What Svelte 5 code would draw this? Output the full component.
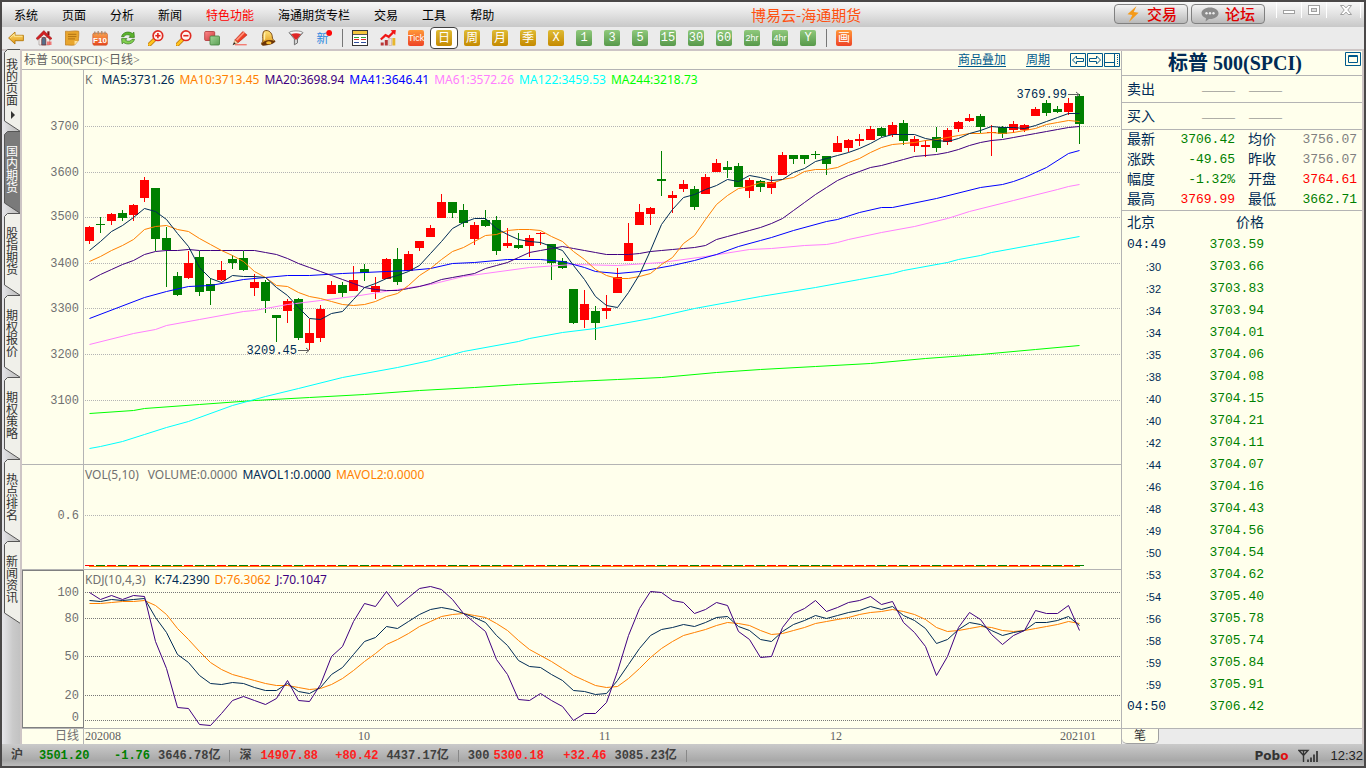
<script>
  const menus = ['系统', '页面', '分析', '新闻', '特色功能', '海通期货专栏', '交易', '工具', '帮助'];
  const tabs = ['我的页面', '国内期货', '股指期货', '期权报价', '期权策略', '热点排名', '新闻资讯'];

  const tools = [
    ['back', '后退'], ['home', '首页'], ['note', '公告'], ['f10', 'F10'], ['refresh', '刷新'],
    ['zoomin', '放大'], ['zoomout', '缩小'], ['overlay', '叠加'], ['pencil', '画线'],
    ['bell', '预警'], ['filter', '过滤'], ['new', '新'],
    ['sep', ''],
    ['quote', '报价'], ['trend', '走势'],
    ['Tick', 'tile orange small'], ['日', 'tile gold on'], ['周', 'tile gold'], ['月', 'tile gold'],
    ['季', 'tile gold'], ['X', 'tile gold latin'],
    ['1', 'tile green latin'], ['3', 'tile green latin'], ['5', 'tile green latin'],
    ['15', 'tile green latin'], ['30', 'tile green latin'], ['60', 'tile green latin'],
    ['2hr', 'tile green small'], ['4hr', 'tile green small'], ['Y', 'tile green latin'],
    ['sep', ''],
    ['画', 'tile orange']
  ];

  // Each bar: direction, high, body top, body bottom, low (chart units)
  const bars = `R 226 227 241 244,G 217 224 225 233,R 213 214 221 225,G 210 213 218 221,R 204 205 215 221,
R 177 180 198 202,G 188 188 239 251,G 227 238 250 287,G 272 276 295 296,R 251 263 278 279,
G 251 257 292 296,G 278 284 291 305,R 261 270 280 281,G 255 259 263 269,G 251 258 270 271,
R 274 282 288 296,G 280 282 301 313,G 315 315 318 342,R 299 301 311 323,G 298 299 338 340,
R 319 333 343 350,R 305 309 338 342,R 281 285 294 294,G 282 285 293 297,R 266 280 291 291,
G 264 269 273 281,R 277 286 292 299,R 258 259 279 279,G 248 259 282 285,R 251 254 271 271,
R 241 241 248 251,R 225 228 237 237,R 194 202 218 218,G 202 202 213 218,G 204 210 223 227,
R 222 225 239 245,G 210 220 226 227,G 216 220 251 255,R 228 243 246 248,G 233 245 248 249,
R 235 238 246 257,R 232 233 234 245,G 244 244 263 280,G 258 261 268 269,G 289 289 323 324,
R 290 304 320 328,G 306 311 323 340,R 295 308 311 319,R 268 277 293 293,R 223 243 261 261,
R 204 212 225 225,R 207 208 214 225,G 151 179 181 196,R 191 195 198 213,R 180 184 189 192,
G 186 189 207 210,R 174 177 194 194,R 159 163 172 172,G 161 167 170 178,G 163 166 187 187,
R 178 180 191 198,G 180 181 187 192,R 176 182 188 194,R 152 155 175 175,G 155 155 159 164,
G 155 155 159 164,G 151 154 155 159,G 156 156 164 175,R 136 143 152 152,R 139 140 148 152,
R 134 139 141 146,R 126 129 140 140,G 127 128 136 137,R 122 125 135 137,G 120 123 141 145,
R 136 139 146 152,R 140 145 147 157,G 127 137 148 152,R 128 130 142 145,R 121 122 129 132,
R 114 118 121 122,G 114 116 127 133,R 125 132 133 156,G 126 127 134 138,R 121 124 130 133,
R 124 125 130 132,R 107 109 116 116,G 100 103 113 116,G 106 109 112 113,R 98 103 112 115,
G 94 96 124 144`.split(',').map((s, i) => {
    const [d, h, t, b, l] = s.trim().split(' ');
    return { x: 89 + 11 * i, color: d === 'R' ? '#ff0000' : '#008000', h: +h, t: +t, b: +b, l: +l };
  });

  const dense = (s) => s.split(',').map((y, i) => `${89.5 + 11 * i},${+y + 0.5}`).join(' ');
  const sparse = (s) => s.split(',').map((p) => {
    const [i, y] = p.split(':');
    return `${89.5 + 11 * i},${+y + 0.5}`;
  }).join(' ');

  const averages = [
    ['#00ff00', sparse('0:413,4:410,5:408,10:404,15:400,20:397,25:394,30:390,35:387,39:384,44:381,48:379,52:377,57:372,61:369,66:366,71:363,76:358,81:354,86:349,90:345')],
    ['#00ffff', sparse('0:448,1:446,3:441,5:434,7:427,9:421,13:405,16:396,19:388,23:377,28:367,31:360,34:351,39:341,40:338,43:332,46:328,51:318,55:308,61:296,66:287,70:279,73:273,74:270,78:262,79:259,81:255,82:252,86:244,90:236')],
    ['#ff80ff', sparse('0:344,4:333,6:329,7:325,10:319,14:311,15:310,18:304,21:300,24:296,28:289,31:284,34:276,40:267,44:264,48:265,52:262,56:256,60:249,62:248,65:245,67:244,68:242,69:239,72:232,75:226,78:218,80:211,84:200,88:189,89:186,90:184')],
    ['#0000ff', sparse('0:318,5:297,7:291,9:286,11:285,14:279,16:277,18:275,20:275,23:273,27:271,29:270,31:268,33:263,35:262,38:259,41:259,43:261,45:267,46:271,48:273,50:271,53:265,55:260,57:254,59:246,61:240,62:237,64:230,67:221,68:219,70:212,72:207,73:207,77:198,81:187,83:184,84:181,85:177,87:167,89:153,90:150')],
    ['#400080', dense('280,274,269,264,260,254,251,250,250,249,250,250,250,250,250,250,252,254,258,263,267,271,275,279,283,287,289,290,290,288,286,283,279,277,275,273,268,265,262,257,252,250,248,246,248,250,252,254,254,254,253,251,250,249,248,247,245,239,236,233,230,227,223,218,210,202,194,187,180,175,171,167,165,162,159,156,155,154,152,149,145,142,140,139,137,135,133,131,129,127,126')],
    ['#ff8000', dense('261,256,250,245,239,229,226,225,229,231,238,244,250,255,261,271,277,285,286,292,296,298,301,304,305,304,301,296,293,285,275,268,259,251,247,241,235,234,230,229,229,230,236,241,251,259,269,275,278,278,276,273,264,257,243,235,219,204,195,188,186,182,183,179,177,171,169,169,167,162,158,152,147,144,143,142,140,139,137,135,133,133,132,133,132,130,128,124,122,120,121')],
    ['#002b55', dense('250,241,231,225,217,208,211,219,233,246,267,278,282,275,276,276,277,287,295,307,318,319,313,311,299,287,283,278,275,271,265,253,241,228,222,218,218,228,234,239,241,242,246,250,265,279,296,305,307,292,274,250,224,209,197,194,189,185,179,181,175,177,180,179,172,168,161,158,155,152,148,143,137,134,134,134,138,140,141,138,133,130,126,127,127,128,125,121,117,113,113')]
  ];

  const kdj = [
    ['#ff8000', dense('603,603,602,601,601,600,605,614,628,639,651,662,669,674,677,680,683,685,685,687,689,688,684,678,670,661,653,644,639,633,626,621,616,614,613,615,617,623,630,640,649,655,661,668,675,680,685,687,686,678,668,657,648,641,635,632,629,625,622,623,625,630,634,633,630,627,623,621,619,617,614,612,611,609,611,614,619,627,631,630,628,626,627,630,631,630,628,626,624,621,623')],
    ['#002b55', dense('600,601,599,600,599,598,617,632,654,662,675,683,684,682,683,687,690,690,683,691,693,687,674,667,654,641,637,626,628,621,614,609,607,609,613,617,622,635,645,660,666,667,674,680,690,691,694,693,680,664,648,635,629,627,624,626,622,617,616,626,630,639,641,631,624,620,615,618,615,612,610,606,609,606,615,620,628,643,639,629,622,624,630,635,632,630,622,622,620,616,625')],
    ['#400080', dense('592,599,595,599,595,596,641,668,707,708,724,725,713,700,696,700,704,698,680,700,701,684,656,646,621,603,606,591,606,597,588,586,589,599,613,622,631,659,674,699,700,693,700,706,720,713,713,702,671,635,608,591,592,600,602,613,609,602,605,631,639,657,656,627,613,608,600,611,607,602,600,596,604,601,622,632,646,675,656,627,612,619,634,644,635,630,610,613,613,605,630')]
  ];

  const mainScale = [['3700', 126], ['3600', 172], ['3500', 217], ['3400', 263], ['3300', 308], ['3200', 354], ['3100', 400]];
  const kdjScale = [['100', 592, 592], ['80', 618, 618], ['50', 656, 656], ['20', 695, 695], ['0', 720, 717]];

  const legends = [
    [['K', '#707070'], ['MA5:3731.26', '#002b55'], ['MA10:3713.45', '#ff8000'], ['MA20:3698.94', '#400080'], ['MA41:3646.41', '#0000ff'], ['MA61:3572.26', '#ff80ff'], ['MA122:3459.53', '#00ffff'], ['MA244:3218.73', '#00ff00']],
    [['VOL(5,10)', '#707070'], ['VOLUME:0.0000', '#707070'], ['MAVOL1:0.0000', '#002b55'], ['MAVOL2:0.0000', '#ff8000']],
    [['KDJ(10,4,3)', '#707070'], ['K:74.2390', '#002b55'], ['D:76.3062', '#ff8000'], ['J:70.1047', '#400080']]
  ];

  const dates = [['202008', 85], ['10', 358], ['11', 599], ['12', 830], ['202101', 1060]];

  const quotes = [
    ['最新', '3706.42', 'down', '均价', '3756.07', 'flat'],
    ['涨跌', '-49.65', 'down', '昨收', '3756.07', 'flat'],
    ['幅度', '-1.32%', 'down', '开盘', '3764.61', 'up'],
    ['最高', '3769.99', 'up', '最低', '3662.71', 'down']
  ];

  const ticks = [
    ['04:49', '3703.59'], [':30', '3703.66'], [':32', '3703.83'], [':34', '3703.94'], [':34', '3704.01'],
    [':35', '3704.06'], [':38', '3704.08'], [':40', '3704.15'], [':40', '3704.21'], [':42', '3704.11'],
    [':44', '3704.07'], [':46', '3704.16'], [':48', '3704.43'], [':49', '3704.56'], [':50', '3704.54'],
    [':53', '3704.62'], [':54', '3705.40'], [':56', '3705.78'], [':58', '3705.74'], [':59', '3705.84'],
    [':59', '3705.91'], ['04:50', '3706.42']
  ];

  const indexes = [
    ['沪', '3501.20', '-1.76', '3646.78亿', 'down'],
    ['深', '14907.88', '+80.42', '4437.17亿', 'up'],
    ['300', '5300.18', '+32.46', '3085.23亿', 'up']
  ];

  const pctX = (x) => ((x - 84) / 1037) * 100;
  const pctY = (y, top, h) => ((y + 0.5 - top) / h) * 100;
</script>

{#snippet icon(name)}
  <svg class="ico" viewBox="0 0 16 16" aria-hidden="true">
    {#if name === 'back'}
      <path d="M.6 8 7 2v3.3h8.4v5.4H7V14z" fill="url(#gGold)" stroke="#b5790d" stroke-width=".9" stroke-linejoin="round" />
      <path d="M2.4 7.6 6.2 4.2v2h8.2" fill="none" stroke="#ffeba0" />
    {:else if name === 'home'}
      <path d="M3 7.5h10.5V15H3z" fill="#f1ece8" stroke="#9b8f8a" stroke-width=".6" />
      <path d="M11.3 1.3h2.2v4h-2.2z" fill="#7a1515" />
      <path d="M0 8.4 7.8.6 16 8.4l-1.6 1.4-6.5-5.5-6.2 5.5z" fill="#d31f22" stroke="#8d1012" stroke-width=".5" />
      <path d="M5.7 15V9.4a2 2 0 0 1 4.2 0V15z" fill="#53708c" stroke="#7d1d1d" stroke-width=".6" />
      <path d="M11 11.5h4.5V15H11z" fill="#ef5350" opacity=".75" />
    {:else if name === 'note'}
      <path d="M1.5 1.2C6 2 10 .2 14.7 1.2c.4 3-.2 6.7-.4 9.6l-3.8 4.3c-3.3.5-6.3-.4-9 0C1.2 10 1.8 6 1.5 1.2z" fill="#e8a52d" stroke="#bd7919" stroke-width=".7" />
      <path d="M10.5 15c.2-1.800 0-3 0-4.200 1.400.4 2.700.2 3.800 0z" fill="#ffe29a" />
      <path d="M4 4.300h8.400M4 6.600h8.400M4 8.900h7" stroke="#a2650d" stroke-width=".8" />
    {:else if name === 'f10'}
      <path d="M.8 4.500 1.600 3h13l.8 1.500V14l-1 1.200H1.700L.8 14z" fill="url(#gOrange)" stroke="#c84b1b" stroke-width=".6" />
      <path d="M2.800 1.600v3M6.200 1v3.400M9.800 1v3.400M13 1.600v3" stroke="#a68b70" stroke-width="1.300" />
      <text x="8" y="12.600" text-anchor="middle" font-size="8" font-weight="700" fill="#fff">F10</text>
    {:else if name === 'refresh'}
      <path d="M1.500 6.700C2.800 1.900 8.800.8 12.300 3.500l1.600-1.300.5 5.200H9.100l1.500-1.600C8.200 4.200 5.300 4.400 4 6.700z" fill="#5cb52c" stroke="#34761a" stroke-width=".7" />
      <path d="M14.500 9.300C13.200 14.100 7.200 15.200 3.700 12.500l-1.600 1.300-.5-5.200h5.300l-1.500 1.600c2.400 1.600 5.300 1.400 6.600-.9z" fill="#83d150" stroke="#34761a" stroke-width=".7" />
    {:else if name === 'zoomin' || name === 'zoomout'}
      <path d="m6.500 9.500-5 5" stroke="#b36f0c" stroke-width="4" stroke-linecap="round" />
      <path d="m6.500 9.500-5 5" stroke="#ffc21e" stroke-width="2.700" stroke-linecap="round" />
      <circle cx="9.900" cy="5.700" r="4.800" fill="#fff5f2" stroke="#df2b22" stroke-width="1.700" />
      <path d="M7.300 5.700h5.200" stroke="#e0241d" stroke-width="1.600" />
      {#if name === 'zoomin'}<path d="M9.900 3.100v5.200" stroke="#e0241d" stroke-width="1.600" />{/if}
    {:else if name === 'overlay'}
      <rect x=".7" y="1.500" width="10" height="9" rx="1" fill="url(#gRed)" stroke="#ae3336" stroke-width=".8" />
      <rect x="6" y="6" width="9.500" height="9" rx="1" fill="url(#gGreen)" stroke="#43823c" stroke-width=".8" />
    {:else if name === 'pencil'}
      <path d="M3 14.700h11.700" stroke="#f37d73" stroke-width="1.400" />
      <path d="m2.800 10 8-8.500 4.300 3.400-9.200 8z" fill="#ee3f26" stroke="#a91d15" stroke-width=".5" />
      <path d="m4 9.400 8-8 1.200 1-8 8.300z" fill="#ff947c" />
      <path d="m2.800 10 3.100 2.900-4.700 1.800z" fill="#f7d8aa" stroke="#a55f2e" stroke-width=".4" />
      <path d="m2.100 12.200 1.600 1.300-3.100 1.700z" fill="#252525" />
    {:else if name === 'bell'}
      <path d="M4.200 1C8.500-.8 12.300 3 12.300 6.900c0 1.900 1.100 3.100 2.900 4.500L3 15.200c-1.500-.2-2-1.500-1.100-2.500 1.500-1.700.8-3.500.8-6.200 0-2.200.3-4.600 1.500-5.500z" fill="url(#gGold)" stroke="#71400b" stroke-width=".9" />
      <path d="M1.800 13.400C4.300 10 9.900 8.700 15.200 11.300c-1.500 3.200-9.600 5.200-13.100 3.600z" fill="#6b3508" />
      <ellipse cx="8.800" cy="12.800" rx="2.700" ry="1.500" fill="#f7bc32" />
      <path d="M4.900 2.800C3.900 5.600 5 8 4.200 9.700" stroke="#fff0ac" stroke-width="1.500" fill="none" />
    {:else if name === 'filter'}
      <path d="M1.200 2.700 6.400 9v5.800l3.100-1.900V9l5.200-6.300z" fill="#d4d4d4" stroke="#646464" stroke-width=".9" />
      <ellipse cx="8" cy="2.800" rx="6.800" ry="1.900" fill="#f8f8f8" stroke="#777" stroke-width=".8" />
      <path d="M3.200 4.200c2.800-1.200 6.900-1.200 9.600 0L8.800 9.500H7.200z" fill="#df2727" />
    {:else if name === 'new'}
      <text x="6.500" y="12.600" text-anchor="middle" font-size="12" fill="#2e88de">新</text>
      <circle cx="13.200" cy="3" r="2.900" fill="#ff0808" />
    {:else if name === 'quote'}
      <rect x=".5" y=".5" width="15" height="15" fill="#fff" stroke="#353535" />
      <path d="M1 1h14v3H1z" fill="#f2c53c" />
      <path d="M1 4.500h14" stroke="#555" />
      <path d="M2 7.500h5M9 7.500h5" stroke="#37a937" />
      <path d="M2 9.500h5M9 9.500h5" stroke="#df2727" />
      <path d="M2 12.500h5M9 12.500h5" stroke="#304f9c" />
    {:else if name === 'trend'}
      <path d="M.7 12.500h3v3h-3zM4.800 10h3v5.500h-3z" fill="#b93636" />
      <path d="M8.800 8.500h2.800v7H8.800z" fill="#f1e2d6" stroke="#aa8585" stroke-width=".4" />
      <path d="M12.400 8h2.900v7.500h-2.900z" fill="#e7b62d" />
      <path d="m.8 9.500 4.700-4.400 3.200 1.700 5.800-5.900" fill="none" stroke="#f01515" stroke-width="2.200" />
      <path d="m10.600.2 5.200-.1-.6 5z" fill="#f01515" />
    {/if}
  </svg>
{/snippet}

{#snippet legend(items)}
  <div class="legend">
    {#each items as [text, color]}<span style:color={color}>{text}</span>{/each}
  </div>
{/snippet}

<svg class="defs" aria-hidden="true">
  <defs>
    <linearGradient id="gGold" x2="0" y2="1"><stop stop-color="#ffe27a" /><stop offset="1" stop-color="#e09512" /></linearGradient>
    <linearGradient id="gOrange" x2="0" y2="1"><stop stop-color="#f9a24c" /><stop offset="1" stop-color="#e8481e" /></linearGradient>
    <linearGradient id="gRed" x2="1" y2="1"><stop stop-color="#ff8c8c" /><stop offset="1" stop-color="#c93438" /></linearGradient>
    <linearGradient id="gGreen" x2="1" y2="1"><stop stop-color="#a3d69a" /><stop offset="1" stop-color="#5c9f54" /></linearGradient>
  </defs>
</svg>

<div class="window">
  <header class="titlebar">
    <nav class="menus">
      {#each menus as m}<button class:hot={m === '特色功能'}>{m}</button>{/each}
    </nav>
    <h1>博易云-海通期货</h1>
    <div class="titleright">
      <button class="pill">
        <svg width="16" height="16" viewBox="0 0 16 16" aria-hidden="true"><path d="M11.5 0 2.5 8.3l4.8.8L4 16l9.6-9.2-4.9-.7z" fill="#f49a1a" /></svg>交易
      </button>
      <button class="pill">
        <svg width="18" height="16" viewBox="0 0 18 16" aria-hidden="true"><path d="M9 1.500c4.800 0 8.500 2.500 8.500 5.700S13.800 13 9 13l-1-.1L4.600 15.500l.4-3.300C2.400 11.200.5 9.400.5 7.200.5 4 4.200 1.500 9 1.500z" fill="#8b8b8b" /><circle cx="5.500" cy="7.300" r="1.200" fill="#eee" /><circle cx="9" cy="7.300" r="1.200" fill="#eee" /><circle cx="12.500" cy="7.300" r="1.200" fill="#eee" /></svg>论坛
      </button>
      <div class="controls">
        <button aria-label="最小化"><svg width="14" height="14" viewBox="0 0 14 14"><rect x="1.500" y="7.500" width="11" height="3" fill="#fff" stroke="#a0a0a0" /></svg></button>
        <button aria-label="最大化"><svg width="14" height="14" viewBox="0 0 14 14"><rect x="1.500" y="2.500" width="11" height="9" fill="#fff" stroke="#a0a0a0" /><rect x="4.500" y="5.500" width="5" height="3" fill="#ddd" stroke="#a0a0a0" /></svg></button>
        <button class="wide" aria-label="关闭"><svg width="14" height="14" viewBox="0 0 14 14"><path d="M1.500 2.500h3.300L7 4.900l2.200-2.400h3.300L8.800 7l3.700 4.500H9.200L7 9.100l-2.200 2.400H1.500L5.200 7z" fill="#fff" stroke="#a0a0a0" /></svg></button>
      </div>
    </div>
  </header>

  <div class="toolbar">
    {#each tools as [name, kind]}
      {#if name === 'sep'}
        <i class="sep"></i>
      {:else if kind.startsWith('tile')}
        <button class="tool" class:on={kind.endsWith('on')}><span class={kind}>{name}</span></button>
      {:else}
        <button class="tool" aria-label={kind}>{@render icon(name)}</button>
      {/if}
    {/each}
  </div>

  <div class="work">
    <nav class="tabs">
      {#each tabs as t, i}
        <button class="tab" class:active={i === 1} class:first={i === 0}>
          <svg viewBox="0 0 16 84" aria-hidden="true"><path d="M16.500 1.500H3.500L.5 4.500V73L16.500 83.500" /></svg>
          <span>{t}</span>
          {#if i === 0}<i class="arrow"></i>{/if}
        </button>
      {/each}
    </nav>

    <main class="chart">
      <div class="charthead">
        <span class="symbol">标普 500(SPCI)&lt;日线&gt;</span>
        <a href="#overlay">商品叠加</a>
        <a href="#period">周期</a>
        <div class="navs">
          <button aria-label="左移"><svg width="16" height="14" viewBox="0 0 16 14"><path d="M.5.5h15v13H.5z" /><path d="m2.500 7 4-4v2.500h7v3h-7V11z" /></svg></button>
          <button aria-label="右移"><svg width="16" height="14" viewBox="0 0 16 14"><path d="M.5.5h15v13H.5z" /><path d="m13.500 7-4-4v2.500h-7v3h7V11z" /></svg></button>
          <button aria-label="布局"><svg width="16" height="14" viewBox="0 0 16 14"><path d="M.5.5h15v13H.5zM10.500.5v13M.5 9.500h10" /><path d="M13.500 2v10" stroke-dasharray="1 1" /></svg></button>
        </div>
      </div>

      <div class="pane main">
        <div class="axis">
          {#each mainScale as [t, y]}<span style:top="{pctY(y, 70, 394)}%">{t}</span>{/each}
        </div>
        <div class="plot">
          <svg viewBox="84 70 1037 394" preserveAspectRatio="none" role="img" aria-label="日K线">
            <g class="crisp">
              {#each mainScale as [, y]}<path d="M85 {y + 0.5}H1121" class="grid" />{/each}
              {#each bars as b}
                <rect x={b.x} y={b.h} width="1" height={b.l - b.h} fill={b.color} />
                <rect x={b.x - 4} y={b.t} width="9" height={b.b - b.t} fill={b.color} />
              {/each}
            </g>
            {#each averages as [color, points]}<polyline {points} stroke={color} />{/each}
            <path class="pointer" d="M298 350.500h11M306 348l3 2.500-3 2.500M1068 94.500h11M1076 92l3 2.500-3 2.500" />
          </svg>
          <span class="mark" style:left="{pctX(297)}%" style:top="{pctY(350, 70, 394)}%">3209.45</span>
          <span class="mark" style:left="{pctX(1067)}%" style:top="{pctY(94, 70, 394)}%">3769.99</span>
          {@render legend(legends[0])}
        </div>
      </div>

      <div class="pane vol">
        <div class="axis"><span style:top="{pctY(515, 465, 104)}%">0.6</span></div>
        <div class="plot">
          <svg viewBox="84 465 1037 104" preserveAspectRatio="none" role="img" aria-label="成交量">
            <g class="crisp">
              <path d="M85 515.500H1121" class="grid" />
              {#each bars as b}<rect x={b.x - 4} y="565" width="9" height="1" fill={b.color} />{/each}
              <rect x="89" y="566" width="991" height="1" fill="#ff8000" />
            </g>
          </svg>
          {@render legend(legends[1])}
        </div>
      </div>

      <div class="pane kdj">
        <div class="axis selected">
          {#each kdjScale as [t, , y]}<span style:top="{pctY(y, 570, 158)}%">{t}</span>{/each}
        </div>
        <div class="plot">
          <svg viewBox="84 570 1037 158" preserveAspectRatio="none" role="img" aria-label="KDJ">
            <g class="crisp">
              {#each kdjScale as [, y]}<path d="M85 {y + 0.5}H1121" class="grid dark" />{/each}
            </g>
            {#each kdj as [color, points]}<polyline {points} stroke={color} />{/each}
          </svg>
          {@render legend(legends[2])}
        </div>
      </div>

      <div class="timeaxis">
        <div class="period">日线</div>
        <div class="dates">
          {#each dates as [t, x]}<span style:left="{pctX(x)}%">{t}</span>{/each}
        </div>
      </div>
    </main>

    <aside class="side">
      <div class="sidetitle">
        <h2>标普 500(SPCI)</h2>
        <button aria-label="还原"><svg width="16" height="14" viewBox="0 0 16 14"><path d="M.5.5h15v13H.5zM3.500 3.500h9v7h-9zM3.500 4.500h9" /></svg></button>
      </div>
      <div class="depth"><b>卖出</b><i>———</i><i>———</i></div>
      <div class="depth"><b>买入</b><i>———</i><i>———</i></div>
      <table class="quotes">
        <tbody>
          {#each quotes as [a, av, ac, b, bv, bc]}
            <tr><th>{a}</th><td class={ac}>{av}</td><th class="second">{b}</th><td class={bc}>{bv}</td></tr>
          {/each}
        </tbody>
      </table>
      <table class="ticks">
        <thead><tr><th>北京</th><th>价格</th><td></td></tr></thead>
        <tbody>
          {#each ticks as [t, p]}
            <tr><td class={t.length > 3 ? 'time' : 'time sec'}>{t}</td><td class="down">{p}</td><td></td></tr>
          {/each}
        </tbody>
      </table>
      <div class="sidefoot"><button>笔</button></div>
    </aside>
  </div>

  <footer class="status">
    {#each indexes as [n, v, c, amt, cls]}
      <span class="idx">
        <span class="name">{n}</span><span class="val {cls}">{v}</span><span class="chg {cls}">{c}</span><span>{amt}</span>
      </span>
    {/each}
    <span class="brand">Pob<em>o</em></span>
    <svg class="signal" width="22" height="14" viewBox="0 0 22 14" aria-hidden="true">
      <path d="M1 1.500h9L5.500 6.500zM5.500 1v12" fill="none" stroke="#333" stroke-width="1.400" />
      <path d="M9 13V10.500h2V13zM12 13V8.500h2V13zM15 13V5.500h2V13zM18 13V2h2v11z" fill="#444" />
    </svg>
    <time>12:32</time>
  </footer>
</div>

<style>
  :global(body) { margin: 0; background: #4a4848; }
  :global(*) { box-sizing: border-box; }
  button { margin: 0; padding: 0; border: 0; background: none; font: inherit; color: inherit; display: flex; align-items: center; justify-content: center; }
  svg { display: block; }
  .defs { position: absolute; width: 0; height: 0; }

  .window {
    height: 100vh;
    min-height: 660px;
    display: flex;
    flex-direction: column;
    border: 2px solid #4a4848;
    background: #ebebeb;
    font: 12px/16px "Liberation Serif", "Noto Sans CJK SC", serif;
    color: #000;
    overflow: hidden;
  }

  .titlebar { position: relative; flex: none; height: 25px; display: flex; justify-content: space-between; background: linear-gradient(#f8f8f8, #e4e4e4 45%, #c8c8c8); font-family: "Noto Sans CJK SC", sans-serif; }
  .menus { display: flex; }
  .menus button { padding: 0 12px; }
  .menus .hot { color: #f00; }
  h1 { position: absolute; left: 55%; margin: 0; font-size: 15px; line-height: 25px; font-weight: 400; color: #ff5010; }
  .titleright { display: flex; gap: 3px; align-items: flex-start; }
  .pill { width: 74px; height: 20px; margin-top: 2px; gap: 6px; border: 1px solid #808080; border-radius: 4px; background: linear-gradient(#f4f4f4, #b9b9b9); color: #e00000; font-size: 15px; line-height: 18px; font-weight: 500; }
  .controls { display: flex; margin-left: 8px; height: 16px; }
  .controls button { width: 25px; border-left: 1px solid #fff; }
  .controls .wide { width: 35px; padding-left: 4px; border-right: 1px solid #fff; margin-right: 3px; }

  .toolbar { flex: none; height: 24px; display: flex; border-bottom: 2px solid #cdc5c5; font-family: "Liberation Sans", "Noto Sans CJK SC", sans-serif; }
  .tool { width: 28px; height: 22px; }
  .tool.on { background: #fff; border: 1px solid #404040; border-radius: 4px; }
  .ico { width: 16px; height: 16px; }
  .sep { width: 8px; display: flex; justify-content: center; }
  .sep::before { content: ""; width: 1px; height: 18px; margin-top: 2px; background: #777; }
  .tile { width: 16px; height: 16px; border-radius: 2px; color: #fff; font-size: 12px; line-height: 16px; text-align: center; }
  .gold { background: linear-gradient(#dfbb35, #c58a00); }
  .green { background: linear-gradient(#8fc97c, #57994a); }
  .orange { background: linear-gradient(#ff9838, #ee4326); }
  .latin { font-family: "Liberation Mono", monospace; font-size: 12px; }
  .small { font-size: 9px; }

  .work { flex: 1; min-height: 0; display: flex; background: #ffffec; }

  .tabs { flex: none; width: 20px; padding-left: 2px; border-right: 2px solid #cdc5c5; background: linear-gradient(90deg, #e6e6ea, #cacaca 60%, #c2c2c2); font-family: "Noto Sans CJK SC", sans-serif; }
  .tab { position: relative; width: 16px; height: 82px; align-items: flex-start; color: #333; }
  .tab svg { position: absolute; left: 0; top: -3px; width: 16px; height: 84px; }
  .tab path { fill: #f0f0ea; stroke: #555; }
  .tab span { position: relative; width: 12px; margin-top: 12px; font-size: 12px; line-height: 12px; overflow-wrap: anywhere; }
  .tab.first span { margin-top: 7px; }
  .tab.active { color: #fff; }
  .tab.active path { fill: #7a7a7a; }
  .arrow { position: absolute; left: 7px; top: 60px; border: 4px solid transparent; border-left-color: #333; border-right: 0; }

  .chart { flex: 1; min-width: 0; display: grid; grid-template-rows: 19px minmax(0, 395fr) minmax(0, 105fr) minmax(0, 159fr) 15px; border-right: 1px solid #b4b4b4; }
  .charthead { display: flex; align-items: center; padding: 0 1px 0 2px; border-bottom: 1px solid #b4b4b4; color: #606060; }
  .symbol { flex: 1; }
  a { color: #005a8c; margin-right: 20px; text-underline-offset: 2px; }
  .navs { display: flex; gap: 1px; }
  .navs svg, .sidetitle svg { fill: none; stroke: #005a8c; }

  .pane, .timeaxis { display: flex; }
  .pane { border-bottom: 1px solid #b4b4b4; }
  .axis, .period { position: relative; flex: none; width: 62px; border-right: 1px solid #b4b4b4; color: #707070; }
  .axis span { position: absolute; right: 4px; margin-top: -8px; font: 12px/16px "Liberation Mono", monospace; }
  .selected { outline: 1px solid #808080; outline-offset: -1px; }
  .plot { position: relative; flex: 1; min-width: 0; }
  .plot > svg { position: absolute; inset: 0; width: 100%; height: 100%; }
  .crisp { shape-rendering: crispEdges; }
  .grid { stroke: #b4b4b4; stroke-dasharray: 1 1; }
  .grid.dark { stroke: #777; }
  polyline, .pointer { fill: none; stroke-width: 1; }
  .pointer { stroke: #606060; }
  .mark { position: absolute; transform: translate(-100%, -50%); color: #002b55; font: 12px/16px "Liberation Mono", monospace; }
  .legend { position: absolute; left: 1px; top: 2px; display: flex; gap: 5px; font: 12px/16px "Noto Sans", sans-serif; white-space: nowrap; }
  .legend span:first-child { padding-right: 4px; }

  .period { text-align: right; padding-right: 4px; line-height: 15px; }
  .dates { position: relative; flex: 1; color: #606060; line-height: 15px; }
  .dates span { position: absolute; top: 0; }

  .side { flex: none; width: 242px; display: flex; flex-direction: column; border-right: 2px solid #cdc5c5; color: #002b55; font-size: 14px; }
  .sidetitle { position: relative; height: 25px; border-bottom: 1px solid #b4b4b4; }
  h2 { margin: 0; padding-right: 14px; text-align: center; font-size: 20px; line-height: 24px; font-weight: 700; }
  .sidetitle button { position: absolute; right: 1px; top: 1px; }
  .depth { display: flex; align-items: center; height: 27px; padding: 2px 0 0 5px; border-bottom: 1px solid #b4b4b4; }
  .depth b { width: 75px; font-weight: 400; }
  .depth i { width: 47px; font-style: normal; font-size: 11px; color: #707070; }
  table { width: 100%; border-collapse: collapse; table-layout: fixed; }
  th, td { padding: 0; font-weight: 400; text-align: left; line-height: 20px; }
  .quotes { border-bottom: 1px solid #b4b4b4; }
  .quotes tr { height: 20px; }
  .quotes th { width: 49px; padding-left: 5px; }
  .quotes .second { width: 57px; padding-left: 13px; }
  .quotes td { text-align: right; font: 13px/20px "Liberation Mono", monospace; }
  .quotes td:nth-child(2) { width: 64px; }
  .quotes td:last-child { padding-right: 5px; }
  .ticks th:first-child { width: 45px; padding-left: 5px; }
  .ticks th:nth-child(2) { width: 97px; text-align: right; }
  .ticks tr { height: 22px; }
  .ticks td { text-align: right; font: 13px/22px "Liberation Mono", monospace; }
  .ticks th { line-height: 23px; }
  .ticks .time { padding-left: 5px; text-align: left; }
  .ticks .sec { padding-right: 6px; text-align: right; font: 11px/22px "Liberation Sans", sans-serif; }
  .up { color: #f00; }
  .down { color: #008000; }
  .flat { color: #808080; }
  .sidefoot { margin-top: auto; height: 16px; border-top: 1px solid #b4b4b4; background: #ebebeb; }
  .sidefoot button { width: 37px; height: 15px; background: #ffffec; border: solid #a0a0a0; border-width: 0 1px 1px 0; border-radius: 0 0 5px 5px; color: #333; font-size: 12px; line-height: 14px; }

  .status { flex: none; height: 22px; display: flex; align-items: center; padding-top: 2px; background: linear-gradient(#cacaca, #a8a8a8 75%, #bcbcbc); color: #404040; font: bold 12px/12px "Liberation Mono", "Noto Sans CJK SC", monospace; }
  .idx { display: flex; height: 12px; padding: 0 9px; border-right: 1px solid #888; }
  .name { min-width: 21px; padding-right: 4px; }
  .val { min-width: 64px; }
  .chg { width: 62px; padding-right: 8px; text-align: right; }
  .idx:first-child .name { min-width: 28px; }
  .idx:first-child .val { min-width: 57px; }
  .idx:nth-child(3) .val { min-width: 59px; }
  .status .up { color: #ff2020; }
  .brand { margin-left: auto; font: bold 12px/16px "DejaVu Sans", sans-serif; color: #333; }
  .brand em { font-style: normal; color: #e01010; }
  .signal { margin: 0 10px; }
  time { font: 13px/16px "Liberation Sans", sans-serif; color: #222; margin-right: 1px; }
</style>
